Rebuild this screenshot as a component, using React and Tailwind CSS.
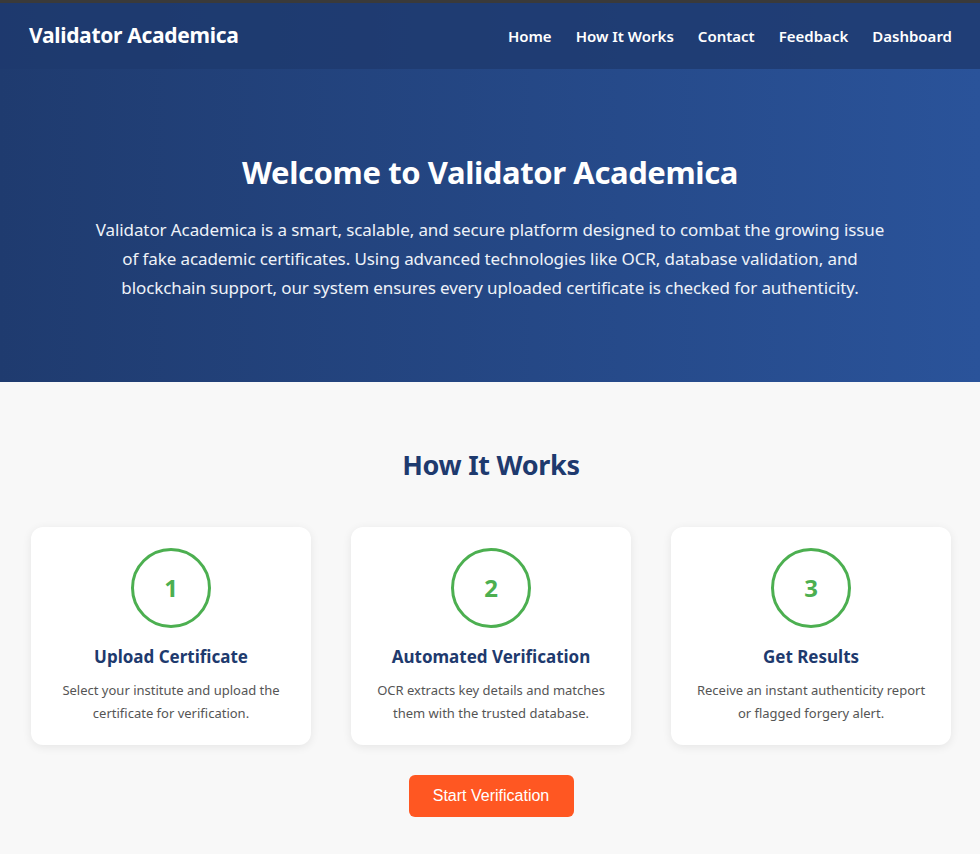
import React from "react";

const steps = [
  {
    n: "1",
    title: "Upload Certificate",
    text: "Select your institute and upload the certificate for verification.",
  },
  {
    n: "2",
    title: "Automated Verification",
    text: "OCR extracts key details and matches them with the trusted database.",
  },
  {
    n: "3",
    title: "Get Results",
    text: "Receive an instant authenticity report or flagged forgery alert.",
  },
];

const App = () => {
  return (
    <div className="min-h-screen bg-[#f8f8f8] font-['Noto_Sans',sans-serif]">
      <div className="h-[3px] bg-[#3a3a3a]" />

      {/* header + hero */}
      <div className="bg-gradient-to-r from-[#1f3b6f] to-[#2a539a]">
        <nav className="flex items-center justify-between h-[66px] pl-[29px] pr-[28px] bg-[#1e3a6e]/80">
          <h1 className="text-[21px] font-bold text-white tracking-[-0.3px]">Validator Academica</h1>
          <ul className="flex gap-[24px] text-[15px] font-semibold text-white">
            <li>Home</li>
            <li>How It Works</li>
            <li>Contact</li>
            <li>Feedback</li>
            <li>Dashboard</li>
          </ul>
        </nav>

        <section className="pt-[84px] pb-[80px] px-8 text-center text-white">
          <h2 className="text-[31px] leading-[38px] font-bold tracking-[-0.4px]">Welcome to Validator Academica</h2>
          <p className="mt-[24px] mx-auto max-w-[800px] text-[17px] leading-[29px] tracking-[-0.1px] text-[#eef2f8]">
            Validator Academica is a smart, scalable, and secure platform designed to combat the growing issue
            of fake academic certificates. Using advanced technologies like OCR, database validation, and
            blockchain support, our system ensures every uploaded certificate is checked for authenticity.
          </p>
        </section>
      </div>

      {/* how it works */}
      <section className="pt-[66px] pb-[37px] pl-[31px] pr-[29px] text-center">
        <h2 className="text-[27px] leading-[34px] font-bold text-[#1e3a6e] tracking-[-0.3px]">How It Works</h2>
        <div className="mt-[45px] grid grid-cols-3 gap-[40px]">
          {steps.map((s) => (
            <div key={s.n} className="bg-white rounded-[12px] shadow-[0_2px_10px_rgba(0,0,0,0.08)] pt-[21px] pb-[22px] px-[20px] h-[218px]">
              <div className="mx-auto w-[80px] h-[80px] rounded-full border-[3px] border-[#4caf50] flex items-center justify-center text-[24px] font-bold text-[#4caf50]">
                {s.n}
              </div>
              <h3 className="mt-[17px] text-[17px] leading-[23px] font-bold text-[#1e3a6e]">{s.title}</h3>
              <p className="mt-[11px] text-[13px] leading-[23px] text-[#555]">{s.text}</p>
            </div>
          ))}
        </div>
        <button className="mt-[30px] w-[165px] h-[42px] rounded-[6px] bg-[#ff5722] text-white text-[16px] font-['Liberation_Sans',Arial,sans-serif]">
          Start Verification
        </button>
      </section>
    </div>
  );
};

export default App;
